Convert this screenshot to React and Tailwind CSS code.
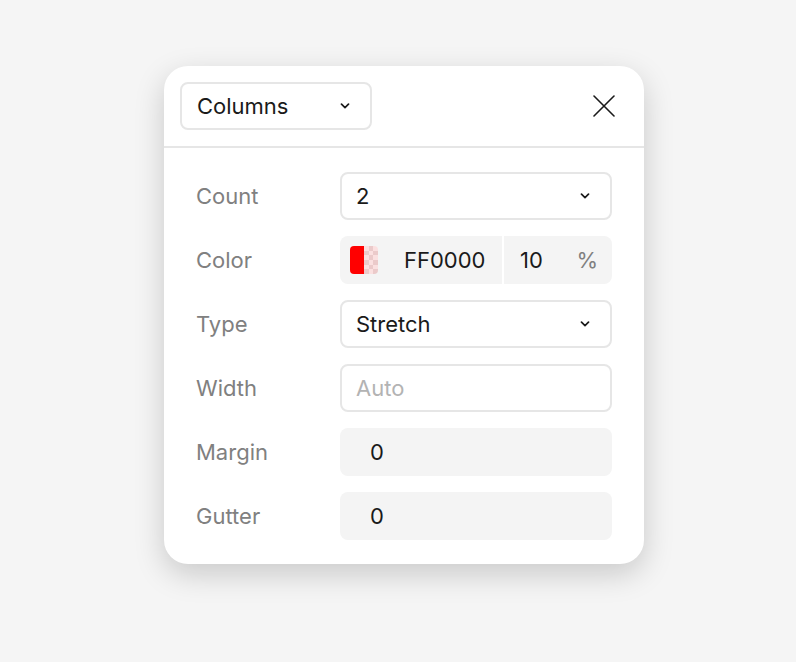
import React from "react";

const font = { fontFamily: "Inter, 'Noto Sans', sans-serif" };

const Chevron = () => (
  <svg width="10" height="6" viewBox="0 0 10 6" fill="none" className="shrink-0">
    <path d="M1.5 1.2 5 4.6 8.5 1.2" stroke="#1a1a1a" strokeWidth="1.7" strokeLinecap="round" strokeLinejoin="round" />
  </svg>
);

const Swatch = () => {
  const cells = [];
  for (let r = 0; r < 6; r++) {
    for (let c = 0; c < 3; c++) {
      cells.push(
        <div
          key={r + "-" + c}
          className={(r + c) % 2 === 0 ? "bg-[#fbe0e0]" : "bg-[#ebcaca]"}
        />
      );
    }
  }
  return (
    <div className="flex h-[28px] w-[28px] shrink-0 overflow-hidden rounded-[4px]">
      <div className="h-full w-[14px] bg-[#ff0000]" />
      <div className="grid h-full w-[14px] grid-cols-3 grid-rows-6">{cells}</div>
    </div>
  );
};

const Row = ({ label, children }) => (
  <div className="flex h-[48px] items-center">
    <div className="w-[144px] text-[22px] text-[#808080]">{label}</div>
    <div className="flex-1">{children}</div>
  </div>
);

const Select = ({ value }) => (
  <div className="flex h-[48px] items-center justify-between rounded-[8px] border-2 border-[#e6e6e6] pl-[14px] pr-[20px] text-[22px] text-[#1a1a1a]">
    <span>{value}</span>
    <Chevron />
  </div>
);

export default function App() {
  return (
    <div style={font} className="min-h-[662px] w-full bg-[#f5f5f5] pl-[164px] pt-[66px]">
      <div className="w-[480px] rounded-[24px] bg-white shadow-[0_10px_30px_rgba(0,0,0,0.18)]">
        {/* header */}
        <div className="flex h-[82px] items-center justify-between border-b-2 border-[#e6e6e6] pl-[16px] pr-[29px]">
          <div className="flex h-[48px] w-[192px] items-center justify-between rounded-[8px] border-2 border-[#e6e6e6] pl-[15px] pr-[20px] text-[22px] text-[#1a1a1a]">
            <span>Columns</span>
            <Chevron />
          </div>
          <svg width="22" height="22" viewBox="0 0 22 22" fill="none">
            <path d="M1 1 21 21M21 1 1 21" stroke="#1a1a1a" strokeWidth="1.6" strokeLinecap="round" />
          </svg>
        </div>

        {/* body */}
        <div className="flex flex-col gap-[16px] px-[32px] pb-[24px] pt-[24px]">
          <Row label="Count">
            <Select value="2" />
          </Row>
          <Row label="Color">
            <div className="flex h-[48px] items-center rounded-[8px] bg-[#f4f4f4] text-[22px] text-[#1a1a1a]">
              <div className="flex h-full w-[162px] items-center pl-[10px]">
                <Swatch />
                <span className="ml-[26px]">FF0000</span>
              </div>
              <div className="h-full w-[2px] bg-white" />
              <div className="flex h-full flex-1 items-center justify-between pl-[16px] pr-[14px]">
                <span>10</span>
                <span className="text-[#808080]">%</span>
              </div>
            </div>
          </Row>
          <Row label="Type">
            <Select value="Stretch" />
          </Row>
          <Row label="Width">
            <div className="flex h-[48px] items-center rounded-[8px] border-2 border-[#e6e6e6] pl-[14px] text-[22px] text-[#b3b3b3]">
              Auto
            </div>
          </Row>
          <Row label="Margin">
            <div className="flex h-[48px] items-center rounded-[8px] bg-[#f4f4f4] pl-[30px] text-[22px] text-[#1a1a1a]">
              0
            </div>
          </Row>
          <Row label="Gutter">
            <div className="flex h-[48px] items-center rounded-[8px] bg-[#f4f4f4] pl-[30px] text-[22px] text-[#1a1a1a]">
              0
            </div>
          </Row>
        </div>
      </div>
    </div>
  );
}
